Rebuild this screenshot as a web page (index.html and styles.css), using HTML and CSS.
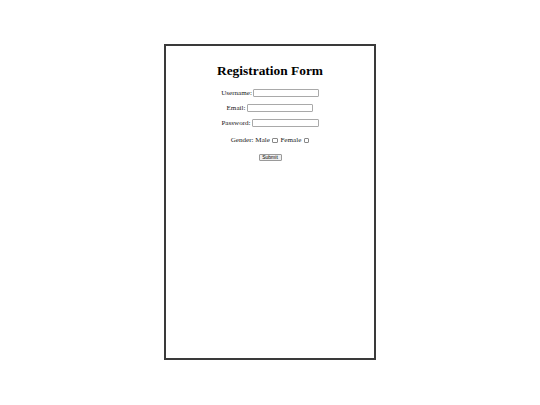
FILE: index.html
```html
<!DOCTYPE html>
<html>
<head>
<meta charset="utf-8">
<link rel="stylesheet" href="styles.css">
</head>
<body>
<div class="card">
  <h1 class="title">Registration Form</h1>
  <form class="form">
    <div class="row"><label>Username:</label><input class="field user" type="text"></div>
    <div class="row"><label>Email:</label><input class="field email" type="text"></div>
    <div class="row"><label>Password:</label><input class="field pass" type="password"></div>
    <div class="row gender">Gender: Male <span class="box"></span> Female <span class="box"></span></div>
    <div class="row action"><button class="submit" type="button">Submit</button></div>
  </form>
</div>
</body>
</html>
```
FILE: styles.css
```css
html, body {
  margin: 0;
  padding: 0;
  background: #fff;
}
body {
  font-family: "Liberation Serif", "Times New Roman", serif;
  color: #222;
}
.card {
  box-sizing: border-box;
  width: 212px;
  height: 316px;
  margin: 44px auto 0;
  border: 2px solid #3a3a3a;
  text-align: center;
  padding-top: 16.5px;
}
.title {
  margin: 0 0 10.3px;
  font-size: 13.4px;
  font-weight: bold;
  color: #000;
  line-height: 16px;
}
.form {
  display: flex;
  flex-direction: column;
  align-items: center;
  gap: 7.2px;
  font-size: 7.1px;
}
.row {
  display: flex;
  align-items: center;
  justify-content: center;
  gap: 1.5px;
  height: 8px;
  color: #222;
}
.gender {
  margin-top: 2px;
  gap: 0;
}
.action {
  margin-top: 1.5px;
}
.field {
  box-sizing: border-box;
  height: 7.5px;
  border: 1px solid #a9a9a9;
  border-radius: 1px;
  padding: 0;
  margin: 0;
  background: #fff;
}
.user { width: 65.5px; }
.email { width: 66.5px; }
.pass { width: 66.5px; }
.box {
  display: inline-block;
  box-sizing: border-box;
  width: 5.5px;
  height: 5.5px;
  border: 1px solid #888;
  border-radius: 1px;
  margin: 0 2.5px 0 2.5px;
}
.box:last-child {
  margin-right: 0;
}
.submit {
  box-sizing: border-box;
  font-family: "Liberation Sans", Arial, sans-serif;
  font-size: 5px;
  width: 23px;
  height: 7px;
  padding: 0;
  border: 1px solid #9a9a9a;
  border-radius: 1px;
  background: #efefef;
  color: #000;
  line-height: 5px;
}
```
